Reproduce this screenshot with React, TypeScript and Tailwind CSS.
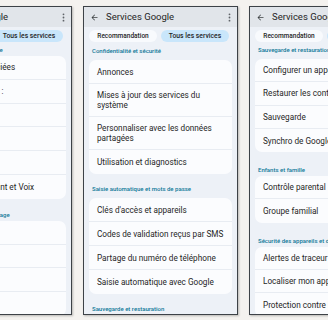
import React from "react";

type Row = { t: string; two?: boolean };
type Section = { label: string; rows: Row[] };

const FONT = { fontFamily: "Roboto, 'Noto Sans', sans-serif" };

function ArrowBack() {
  return (
    <svg width="9" height="9" viewBox="0 0 24 24" className="shrink-0">
      <path d="M20 11H7.83l5.59-5.59L12 4l-8 8 8 8 1.41-1.41L7.83 13H20v-2z" fill="#3c4043" />
    </svg>
  );
}

function Kebab() {
  return (
    <svg width="3" height="9" viewBox="0 0 3 9" className="shrink-0">
      <circle cx="1.5" cy="1.3" r="0.9" fill="#5f6368" />
      <circle cx="1.5" cy="4.5" r="0.9" fill="#5f6368" />
      <circle cx="1.5" cy="7.7" r="0.9" fill="#5f6368" />
    </svg>
  );
}

type Spacing = {
  firstLabel: string;
  label: string;
  row: string;
};

function Phone({ sections, sp }: { sections: Section[]; sp: Spacing }) {
  return (
    <div className="w-[155px] h-[309px] shrink-0 border-[1.5px] border-[#3d4247] bg-[#edf1f7] overflow-hidden flex flex-col shadow-[1px_1px_2px_rgba(0,0,0,0.25)]">
      <div className="h-[20px] shrink-0 bg-[#e1e5ea] flex items-center pl-[6px] pr-[6px]">
        <ArrowBack />
        <span className="ml-[7px] text-[9.5px] text-[#1f1f1f] leading-none">Services Google</span>
        <div className="ml-auto">
          <Kebab />
        </div>
      </div>
      <div className="flex gap-[4px] px-[5px] mt-[3px] shrink-0">
        <div className="h-[12px] w-[68px] rounded-full bg-[#f8fafd] flex items-center justify-center text-[6.5px] font-medium text-[#1f1f1f] leading-none">
          Recommandation
        </div>
        <div className="h-[12px] w-[68px] rounded-full bg-[#c9e6fb] flex items-center justify-center text-[6.8px] font-medium text-[#1f1f1f] leading-none">
          Tous les services
        </div>
      </div>
      <div className="flex flex-col px-[5px]">
        {sections.map((s, i) => (
          <div key={i} className="flex flex-col">
            <div
              className={`${i === 0 ? sp.firstLabel : sp.label} h-[8px] flex items-center pl-[3px] text-[6px] font-medium text-[#0e7898] leading-none whitespace-nowrap`}
            >
              {s.label}
            </div>
            <div className="bg-[#fbfcfe] rounded-[7px] flex flex-col divide-y divide-[#e8ecf2]">
              {s.rows.map((r, j) => (
                <div
                  key={j}
                  className={`${r.two ? "h-[33px]" : sp.row} flex items-center px-[8px] text-[8.2px] leading-[10px] text-[#1f1f1f]`}
                >
                  <span className={r.two ? "" : "whitespace-nowrap"}>{r.t}</span>
                </div>
              ))}
            </div>
          </div>
        ))}
      </div>
    </div>
  );
}

const p1: Section[] = [
  {
    label: "Paramètres de l'appli Google",
    rows: [
      { t: "Applications associées" },
      { t: "Google Fit et santé :" },
      { t: "Google Pay" },
      { t: "Discover" },
      { t: "Android Auto" },
      { t: "Recherche, Assistant et Voix" },
    ],
  },
  {
    label: "Appareils connectés et partage",
    rows: [{ t: "Appareils" }, { t: "Cast" }, { t: "Chromebook" }, { t: "Partage" }],
  },
];

const p2: Section[] = [
  {
    label: "Confidentialité et sécurité",
    rows: [
      { t: "Annonces" },
      { t: "Mises à jour des services du système", two: true },
      { t: "Personnaliser avec les données partagées", two: true },
      { t: "Utilisation et diagnostics" },
    ],
  },
  {
    label: "Saisie automatique et mots de passe",
    rows: [
      { t: "Clés d'accès et appareils" },
      { t: "Codes de validation reçus par SMS" },
      { t: "Partage du numéro de téléphone" },
      { t: "Saisie automatique avec Google" },
    ],
  },
  {
    label: "Sauvegarde et restauration",
    rows: [{ t: "Configurer un appareil" }],
  },
];

const p3: Section[] = [
  {
    label: "Sauvegarde et restauration",
    rows: [
      { t: "Configurer un appareil à proximité" },
      { t: "Restaurer les contacts" },
      { t: "Sauvegarde" },
      { t: "Synchro de Google Contacts" },
    ],
  },
  {
    label: "Enfants et famille",
    rows: [{ t: "Contrôle parental" }, { t: "Groupe familial" }],
  },
  {
    label: "Sécurité des appareils et des identifiants",
    rows: [
      { t: "Alertes de traceur inconnu" },
      { t: "Localiser mon appareil" },
      { t: "Protection contre le vol" },
    ],
  },
];

export default function App() {
  return (
    <div className="w-[328px] h-[320px] overflow-hidden bg-[#f4f2ef]" style={FONT}>
      <div className="flex gap-[11px] ml-[-83px] pt-[6px]">
        <Phone
          sections={p1}
          sp={{ firstLabel: "mt-[4px] mb-[2px]", label: "mt-[12px] mb-[2px]", row: "h-[23.8px]" }}
        />
        <Phone
          sections={p2}
          sp={{ firstLabel: "mt-[5px] mb-[5px]", label: "mt-[11px] mb-[5px]", row: "h-[24px]" }}
        />
        <Phone
          sections={p3}
          sp={{ firstLabel: "mt-[4px] mb-[5px]", label: "mt-[14px] mb-[2px]", row: "h-[23.3px]" }}
        />
      </div>
    </div>
  );
}
